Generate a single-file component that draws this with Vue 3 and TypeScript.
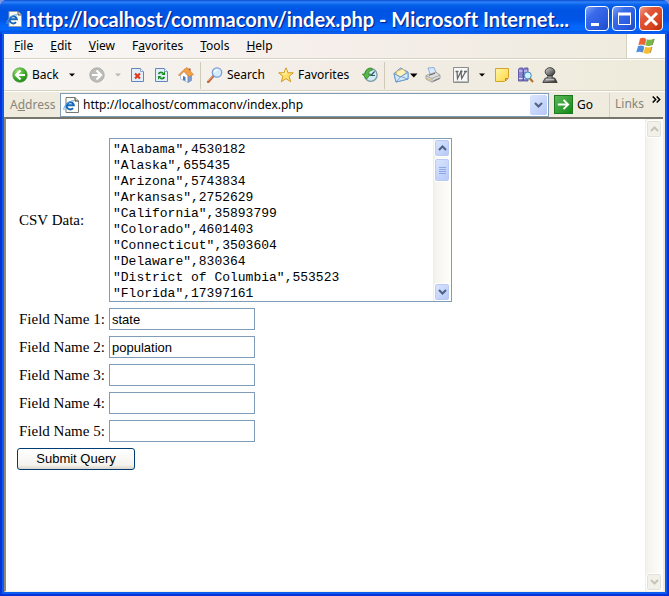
<script setup lang="ts">
import { ref } from 'vue'

interface MenuEntry {
  before: string
  key: string
  after: string
}

const menu: MenuEntry[] = [
  { before: '', key: 'F', after: 'ile' },
  { before: '', key: 'E', after: 'dit' },
  { before: '', key: 'V', after: 'iew' },
  { before: 'F', key: 'a', after: 'vorites' },
  { before: '', key: 'T', after: 'ools' },
  { before: '', key: 'H', after: 'elp' },
]

const address = ref('http://localhost/commaconv/index.php')

const csv = ref(
  [
    '"Alabama",4530182',
    '"Alaska",655435',
    '"Arizona",5743834',
    '"Arkansas",2752629',
    '"California",35893799',
    '"Colorado",4601403',
    '"Connecticut",3503604',
    '"Delaware",830364',
    '"District of Columbia",553523',
    '"Florida",17397161',
  ].join('\n'),
)

const fields = ref<string[]>(['state', 'population', '', '', ''])
</script>

<template>
  <div class="window">
    <header class="titlebar">
      <svg class="icon" viewBox="0 0 16 16" aria-hidden="true">
        <path d="M3 .5h9l3.500 3.500v11.500H3z" fill="#fffef4" stroke="#8f9dab" />
        <path d="M12 .5V4h3.500" fill="#dcdccd" stroke="#555" />
        <path d="M10 11.200a3.600 3.600 0 1 1 .8-3H4.500" fill="none" stroke="#1767bd" stroke-width="2" />
        <path d="M1 13C-.5 9 8 2.500 11 4" fill="none" stroke="#4ba1e8" />
      </svg>
      <h1 class="title">http://localhost/commaconv/index.php - Microsoft Internet...</h1>
      <button class="caption" type="button" aria-label="Minimize">
        <svg viewBox="0 0 22 22"><path d="M5 16.500h8" stroke="#fff" stroke-width="3" /></svg>
      </button>
      <button class="caption" type="button" aria-label="Maximize">
        <svg viewBox="0 0 22 22"><path d="M5.500 5.500h12v11h-12z" fill="none" stroke="#fff" /><path d="M5 6h13" stroke="#fff" stroke-width="3" /></svg>
      </button>
      <button class="caption close" type="button" aria-label="Close">
        <svg viewBox="0 0 22 22"><path d="M5 5l12 12M17 5L5 17" stroke="#fff" stroke-width="3" /></svg>
      </button>
    </header>

    <div class="frame">
      <nav class="menubar">
        <button v-for="m in menu" :key="m.key" class="menu-item" type="button">{{ m.before }}<u>{{ m.key }}</u>{{ m.after }}</button>
        <div class="brand">
          <svg viewBox="0 0 20 18" aria-hidden="true">
            <path d="M4 1.500q3-1.500 6 .2L8.400 8.200q-3-1.500-6 0z" fill="#ed6332" />
            <path d="M11 2.200q3 1.500 7.500-.7L16.500 8q-3.500 1.700-7 .5z" fill="#78b843" />
            <path d="M2 9.300q3-1.500 6 0L6.500 15.500q-3-1.600-6.300-.1z" fill="#4b8ce0" />
            <path d="M9.200 9.800q3.500 1.500 7-.3l-1.700 6.200q-3.500 2-7 .3z" fill="#f8bd2e" />
            <path d="M10 2.500L8.700 8.200M18.300 2l-2 6M7.900 10l-1.300 5.300M16 10l-1.600 5.800" stroke="#667" stroke-width=".6" />
          </svg>
        </div>
      </nav>

      <div class="toolbar" role="toolbar" aria-label="Standard buttons">
        <button class="tool back" type="button">
          <svg class="icon" viewBox="0 0 16 16">
            <defs>
              <radialGradient id="green" cx=".35" cy=".25" r=".8"><stop offset="0" stop-color="#a4df78" /><stop offset=".55" stop-color="#44ad30" /><stop offset="1" stop-color="#21851d" /></radialGradient>
            </defs>
            <circle cx="8" cy="8" r="7.300" fill="url(#green)" stroke="#4b9e3d" stroke-width=".6" />
            <path d="M8.500 3.500L4 8l4.500 4.500M4.500 8H13" fill="none" stroke="#fff" stroke-width="2.200" />
          </svg>
          <span>Back</span>
          <svg class="caret end" viewBox="0 0 6 4"><path d="M0 .5h6L3 3.500z" fill="#000" /></svg>
        </button>
        <button class="tool split" type="button" aria-label="Forward" disabled>
          <svg class="icon" viewBox="0 0 16 16">
            <circle cx="8" cy="8" r="7.200" fill="#bcbcb9" stroke="#a5a5a2" stroke-width=".8" />
            <path d="M7.500 3.500L12 8l-4.500 4.500M11.500 8H3" fill="none" stroke="#fff" stroke-width="2.200" />
          </svg>
          <svg class="caret far" viewBox="0 0 6 4"><path d="M0 .5h6L3 3.500z" fill="#b9b7ae" /></svg>
        </button>
        <button class="tool" type="button" aria-label="Stop">
          <svg class="icon" viewBox="0 0 16 16">
            <path d="M1.500 1.500h9l3 3v10h-12z" fill="#e3effc" stroke="#6685bd" />
            <path d="M10.500 1.500v3h3" fill="#fff" stroke="#8aa3cc" />
            <path d="M5 6.500l5 5M10 6.500l-5 5" stroke="#e33a1c" stroke-width="2.200" />
          </svg>
        </button>
        <button class="tool" type="button" aria-label="Refresh">
          <svg class="icon" viewBox="0 0 16 16">
            <path d="M1.500 1.500h9l3 3v10h-12z" fill="#e3effc" stroke="#6685bd" />
            <path d="M10.500 1.500v3h3" fill="#fff" stroke="#8aa3cc" />
            <path d="M4.500 7q1.500-2.500 4.500-1M10.500 10q-1.500 2.500-4.500 1" fill="none" stroke="#168c20" stroke-width="1.600" />
            <path d="M7.500 8h3.500V4.200zM7.500 9H4v3.800z" fill="#168c20" />
          </svg>
        </button>
        <button class="tool" type="button" aria-label="Home">
          <svg class="icon" viewBox="0 0 16 16">
            <path d="M10.500 1.500h2v3h-2z" fill="#a54e27" />
            <path d="M2.500 8L6 4.500l4 4.500v6.500L2.500 12z" fill="#fff" stroke="#9db6d8" stroke-width=".7" />
            <path d="M10 9l3.500-1.500v6L10 15.500z" fill="#7d9ed3" stroke="#6785b7" stroke-width=".6" />
            <path d="M5 9l2.500 1v4L5 13z" fill="#4f78b4" />
            <path d="M.5 8L6 2.500 9 .5l6.500 7-4.500 2.200L6 4.300 1.300 9z" fill="#f4a044" stroke="#d27a2a" stroke-width=".6" />
          </svg>
        </button>
        <span class="divider"></span>
        <button class="tool search" type="button">
          <svg class="icon" viewBox="0 0 16 16">
            <path d="M6 9.500L1.200 14.800" stroke="#b9683e" stroke-width="2.600" stroke-linecap="round" />
            <path d="M5.500 9.500L1.200 14" stroke="#eba77d" />
            <circle cx="10" cy="5.500" r="4.700" fill="#d4edfd" stroke="#7c9fd6" stroke-width="1.300" />
            <path d="M7.500 5q.5-2.300 3-2.300" fill="none" stroke="#fff" stroke-width="1.400" />
          </svg>
          <span>Search</span>
        </button>
        <button class="tool favs" type="button">
          <svg class="icon" viewBox="0 0 16 16">
            <path d="M8 .8l2 5h5.300l-4.200 3.500 1.600 5.500L8 11.600l-4.700 3.200 1.600-5.500L.7 5.800H6z" fill="#ffe169" stroke="#d49a21" stroke-linejoin="round" />
            <path d="M8 3v4L4 6.800" fill="none" stroke="#fff7bf" />
          </svg>
          <span>Favorites</span>
        </button>
        <button class="tool" type="button" aria-label="History">
          <svg class="icon" viewBox="0 0 16 16">
            <circle cx="8.800" cy="8" r="6.300" fill="#d3eaf3" stroke="#759aa6" stroke-width="1.300" />
            <path d="M12.500 4.500L9 8.500h4" fill="none" stroke="#34566b" stroke-width="1.200" />
            <path d="M9.500 1Q4 .5 3 7H.3L4.700 12l4-5H6.200Q6.500 3.500 10.500 3z" fill="#56b941" stroke="#247e24" stroke-width=".7" />
          </svg>
        </button>
        <span class="divider wide"></span>
        <button class="tool mail" type="button" aria-label="Mail">
          <svg class="icon" viewBox="0 0 16 16">
            <path d="M1 6.500L7.500 1 15 5v7L3 15z" fill="#a9cdf1" stroke="#6595cb" />
            <path d="M3.500 4.500L10 2l3 3.500-5 4.500-4.500-2.500z" fill="#fff3bd" stroke="#e1ad4d" stroke-width=".7" />
            <path d="M1 6.500L7 10l8-4.500V12L3 15z" fill="#d4eafc" stroke="#6595cb" stroke-width=".9" />
            <path d="M3 15l5-5.500 7 2.500" fill="none" stroke="#6595cb" stroke-width=".8" />
          </svg>
          <svg class="caret big" viewBox="0 0 8 5"><path d="M0 .5h7.500L3.800 4.500z" fill="#000" /></svg>
        </button>
        <button class="tool print" type="button" aria-label="Print">
          <svg class="icon" viewBox="0 0 16 16">
            <path d="M3 1l6-.5 2.500 6-6 1.500z" fill="#d5eafd" stroke="#799bcf" stroke-width=".8" />
            <path d="M1 8.500l10-3.300L15 8v3.500l-8 3.700L1 12z" fill="#dedede" stroke="#959595" stroke-width=".8" />
            <path d="M1 9l6 2.500L15 8M7 11.500v3.200" fill="none" stroke="#999" stroke-width=".8" />
            <path d="M4 8.300l6-2" stroke="#666" /><path d="M8.500 14l6-2.800" stroke="#777" stroke-width="1.200" />
            <path d="M2.500 11.500l3 1.300" stroke="#e7b93b" />
          </svg>
        </button>
        <button class="tool split" type="button" aria-label="Edit with Word">
          <svg class="icon" viewBox="0 0 16 16">
            <path d="M.5.500h15v15H.5z" fill="#f8f8f8" stroke="#8d8d8d" />
            <path d="M14.500 1.500v13h-13" fill="none" stroke="#bbb" />
            <path d="M2.500 4.500h3M4 4.500l.5 7L8 4.500l.7 7 4-7M7 4.500h2.500M11 4.500h3" fill="none" stroke="#686868" stroke-width="1.300" />
          </svg>
          <svg class="caret far" viewBox="0 0 6 4"><path d="M0 .5h6L3 3.500z" fill="#000" /></svg>
        </button>
        <button class="tool" type="button" aria-label="Discuss">
          <svg class="icon" viewBox="0 0 16 16">
            <defs><linearGradient id="note" x2="1" y2="1"><stop offset="0" stop-color="#fff6a9" /><stop offset="1" stop-color="#ffd63d" /></linearGradient></defs>
            <path d="M1.500 1.500h13v9l-4 4h-9z" fill="url(#note)" stroke="#d6a42a" />
            <path d="M11.500 14v-2.500h2.500z" fill="#fff5ba" stroke="#b98620" />
          </svg>
        </button>
        <button class="tool" type="button" aria-label="Research">
          <svg class="icon" viewBox="0 0 16 16">
            <path d="M.5 2.500l1-1.500H5v13H.5zM5.500 2.500l1-1.500H10v13H5.500z" fill="#8b86d4" stroke="#4b4894" stroke-width=".8" />
            <path d="M1 4h3.500M6 4h3.500M1 11.500h3.500M6 11.500h3.500" stroke="#dedcff" />
            <path d="M11.500 11l3.500 4" stroke="#b87328" stroke-width="2" />
            <circle cx="9.800" cy="8.500" r="3.500" fill="#c9f1ff" stroke="#4584b7" />
          </svg>
        </button>
        <button class="tool" type="button" aria-label="Messenger">
          <svg class="icon" viewBox="0 0 16 16">
            <defs><linearGradient id="metal" x2="1" y2="1"><stop offset="0" stop-color="#e2e2e2" /><stop offset=".5" stop-color="#808080" /><stop offset="1" stop-color="#2a2a2a" /></linearGradient></defs>
            <path d="M5.500 8h5l-.5 2.500 3 .8 2.200 4.200H.8L3 11.300l3-.8z" fill="url(#metal)" stroke="#303030" stroke-width=".8" />
            <ellipse cx="8" cy="4.800" rx="4.800" ry="4.100" fill="url(#metal)" stroke="#303030" stroke-width=".9" />
            <path d="M4 12.800h8" stroke="#e8e8e8" stroke-width=".9" />
          </svg>
        </button>
      </div>

      <div class="addressbar">
        <label class="address-label" for="address">A<u>d</u>dress</label>
        <div class="combo">
          <svg class="icon" viewBox="0 0 16 16" aria-hidden="true">
            <path d="M3 .5h9l3.500 3.500v11.500H3z" fill="#fffef4" stroke="#777" />
            <path d="M12 .5V4h3.500" fill="#dcdccd" stroke="#333" />
            <path d="M10 11.200a3.600 3.600 0 1 1 .8-3H4.500" fill="none" stroke="#1767bd" stroke-width="2" />
            <path d="M1 13C-.5 9 8 2.500 11 4" fill="none" stroke="#4ba1e8" />
          </svg>
          <input id="address" v-model="address" class="address" type="text" />
          <button class="drop" type="button" aria-label="Show addresses">
            <svg viewBox="0 0 9 6"><path d="M1 1l3.500 3.500L8 1" fill="none" stroke="#4d6185" stroke-width="2" /></svg>
          </button>
        </div>
        <button class="go" type="button">
          <span class="go-icon"><svg viewBox="0 0 16 16"><path d="M2 8h11M8 3l5 5-5 5" fill="none" stroke="#fff" stroke-width="2" /></svg></span>
          <span>Go</span>
        </button>
        <div class="links">
          <span>Links</span>
          <svg viewBox="0 0 9 7" aria-hidden="true"><path d="M.7.500l3 3-3 3M4.700.500l3 3-3 3" fill="none" stroke="#000" stroke-width="1.500" /></svg>
        </div>
      </div>

      <div class="viewport">
        <main class="page">
          <form class="form" @submit.prevent>
            <label for="csv">CSV Data:</label>
            <div class="csv-box">
              <textarea id="csv" v-model="csv" class="csv" spellcheck="false" wrap="off"></textarea>
              <div class="scroll" aria-hidden="true">
                <span class="knob"><svg viewBox="0 0 9 6"><path d="M1 5l3.500-3.500L8 5" fill="none" stroke="#4d6185" stroke-width="2" /></svg></span>
                <span class="knob thumb"><i></i><i></i><i></i><i></i></span>
                <span class="knob last"><svg viewBox="0 0 9 6"><path d="M1 1l3.500 3.500L8 1" fill="none" stroke="#4d6185" stroke-width="2" /></svg></span>
              </div>
            </div>
            <template v-for="(_, i) in fields" :key="i">
              <label :for="`field-${i}`">Field Name {{ i + 1 }}:</label>
              <input :id="`field-${i}`" v-model="fields[i]" class="field" type="text" />
            </template>
            <button class="submit" type="submit">Submit Query</button>
          </form>
        </main>
        <div class="scroll page-scroll" aria-hidden="true">
          <span class="knob idle"><svg viewBox="0 0 9 6"><path d="M1 5l3.500-3.500L8 5" fill="none" stroke="#c5c4bb" stroke-width="2" /></svg></span>
          <span class="knob idle last"><svg viewBox="0 0 9 6"><path d="M1 1l3.500 3.500L8 1" fill="none" stroke="#c5c4bb" stroke-width="2" /></svg></span>
        </div>
      </div>
    </div>
  </div>
</template>

<style>
body {
  margin: 0;
  background: #7d97e0;
}
</style>

<style scoped>
* {
  box-sizing: border-box;
}

button,
input,
textarea {
  margin: 0;
  padding: 0;
  border: 0;
  border-radius: 0;
  outline: 0;
  background: none;
  color: inherit;
  font: inherit;
}

svg {
  display: block;
  flex: none;
}

.window {
  display: flex;
  flex-direction: column;
  min-height: 100vh;
  border-radius: 7px 7px 0 0;
  background: #0831d9;
  overflow: hidden;
  color: #000;
  font: 12px/16px "Noto Sans", sans-serif;
}

.icon {
  width: 16px;
  height: 16px;
}

.titlebar {
  display: flex;
  align-items: center;
  gap: 3px;
  height: 34px;
  padding: 3px 6px 0;
  background: linear-gradient(#0a4bd0 0, #2f83fb 2px, #0560ea 5px, #0054e3 10px, #0055e6 20px, #0366fd 26px, #0366fd 30px, #0040c4 34px);
}

.title {
  flex: 1;
  min-width: 0;
  margin: 0;
  padding-left: 1px;
  overflow: hidden;
  white-space: nowrap;
  color: #fff;
  font: 700 20px/24px Lato, sans-serif;
  font-variant-ligatures: none;
  text-shadow: 1px 1px 1px #0a1883;
}

.caption {
  flex: none;
  width: 24px;
  height: 25px;
  border: 1px solid #fff;
  border-radius: 4px;
  background: linear-gradient(135deg, #7fa4f7, #3a6bea 30%, #2a5be0 70%, #1f4bc0);
}

.caption.close {
  background: linear-gradient(135deg, #f0a28c, #e2583a 30%, #d9431f 70%, #b52c0b);
}

.caption svg {
  width: 22px;
  height: 22px;
}

.frame {
  display: flex;
  flex: 1;
  flex-direction: column;
  margin: 0 4px 4px;
  background: #efebde;
  box-shadow: 0 0 0 2px #0c5cf0;
}

.menubar {
  display: flex;
  align-items: center;
  gap: 17px;
  height: 25px;
  padding-left: 10px;
  border-bottom: 1px solid #d6d2c0;
  background: linear-gradient(90deg, #f8f7f5, #f5eeea 50%, #eeebdd);
}

.brand {
  display: flex;
  align-items: center;
  align-self: stretch;
  justify-content: center;
  width: 39px;
  margin-left: auto;
  border-left: 1px solid #d6d2c0;
  background: #fff;
}

.brand svg {
  width: 20px;
  height: 18px;
}

.toolbar {
  display: flex;
  align-items: center;
  height: 32px;
  padding-left: 4px;
  border-top: 1px solid #fff;
  border-bottom: 1px solid #d6d2c0;
  background: linear-gradient(90deg, #f7f5f2, #f3ede6 50%, #eeebdb);
}

.tool {
  display: flex;
  flex: none;
  align-items: center;
  gap: 4px;
  width: 24px;
  height: 24px;
  padding: 0 4px;
}

.tool.back {
  width: 77px;
  padding-right: 10px;
}

.tool.split {
  width: 41px;
}

.tool.search {
  width: 71px;
}

.tool.favs {
  width: 84px;
}

.tool.mail {
  gap: 1px;
  width: 32px;
}

.tool.print {
  width: 28px;
}

.caret {
  width: 6px;
  height: 4px;
}

.caret.big {
  width: 8px;
  height: 5px;
}

.caret.far {
  margin-left: 6px;
}

.caret.end {
  margin-left: auto;
}

.divider {
  width: 1px;
  height: 27px;
  margin: 0 2px;
  background: #cfcab5;
}

.divider.wide {
  margin-right: 4px;
}

.addressbar {
  display: flex;
  align-items: center;
  height: 26px;
  padding-left: 6px;
  border-top: 1px solid #fff;
  background: #efebde;
}

.address-label,
.links {
  color: #87857a;
}

.address-label {
  width: 50px;
}

.combo {
  display: flex;
  flex: 1;
  align-items: center;
  gap: 4px;
  height: 24px;
  padding: 1px 1px 1px 2px;
  border: 1px solid #7f9db9;
  background: #fff;
}

.address {
  flex: 1;
  min-width: 0;
}

.drop {
  display: flex;
  align-items: center;
  justify-content: center;
  width: 17px;
  height: 20px;
  border-radius: 2px;
  background: linear-gradient(135deg, #dbe5fe, #b5c8f6);
}

.drop svg,
.knob svg {
  width: 9px;
  height: 6px;
}

.go {
  display: flex;
  align-items: center;
  gap: 4px;
  width: 60px;
  padding-left: 5px;
}

.go-icon {
  padding: 1px;
  border: 1px solid #1b7a1e;
  background: linear-gradient(135deg, #5cb85a, #118a14);
}

.go-icon svg {
  width: 15px;
  height: 15px;
}

.links {
  display: flex;
  gap: 8px;
  width: 56px;
  height: 24px;
  padding: 3px 0 0 5px;
  border-left: 1px solid #d6d2c0;
}

.links svg {
  width: 9px;
  height: 7px;
}

.viewport {
  display: flex;
  flex: 1;
  margin-right: 2px;
  border: solid;
  border-width: 2px 0 1px 2px;
  border-color: #77756a #f5efe4 #f5efe4 #8d8a7c;
  background: #fff;
}

.page {
  flex: 1;
  min-width: 0;
  padding: 19px 0 0 11px;
  font: 15px/20px "Liberation Serif", serif;
}

.form {
  display: grid;
  grid-template-columns: 88px 1fr;
  align-items: center;
  justify-items: start;
  gap: 6px 4px;
}

.form label {
  padding-left: 2px;
  white-space: nowrap;
}

.csv-box {
  display: flex;
  width: 343px;
  height: 164px;
  border: 1px solid #7f9db9;
}

.csv {
  flex: 1;
  min-width: 0;
  padding: 3px 3px 0;
  overflow: hidden;
  resize: none;
  white-space: pre;
  font: 13px/16px "Liberation Mono", monospace;
}

.scroll {
  display: flex;
  flex-direction: column;
  gap: 1px;
  width: 18px;
  padding: 0 1px;
  background: linear-gradient(90deg, #eeede5 0, #f5f4ef 3px, #fefefb);
}

.page-scroll {
  padding-top: 1px;
}

.knob {
  display: flex;
  flex-direction: column;
  align-items: center;
  justify-content: center;
  height: 18px;
  border: 1px solid #fff;
  border-radius: 3px;
  background: linear-gradient(135deg, #dbe5fe, #b5c8f6);
  box-shadow: inset 0 0 0 1px #b9cbf3;
}

.knob.thumb {
  gap: 1px;
  height: 24px;
}

.knob.thumb i {
  width: 7px;
  height: 1px;
  background: #8fa9e6;
}

.knob.last {
  margin-top: auto;
}

.knob.idle {
  background: #f2f1e9;
  box-shadow: inset 0 0 0 1px #e3e1d6;
}

.field {
  width: 146px;
  height: 22px;
  padding: 0 2px;
  border: 1px solid #7f9db9;
  background: #fff;
  font: 13px/16px "Liberation Sans", sans-serif;
}

.submit {
  grid-column: 1 / -1;
  width: 118px;
  height: 22px;
  border: 1px solid #003c74;
  border-radius: 3px;
  background: linear-gradient(#fff, #f4f3ee 80%, #dbd5cb);
  font: 13px/16px "Liberation Sans", sans-serif;
}
</style>
